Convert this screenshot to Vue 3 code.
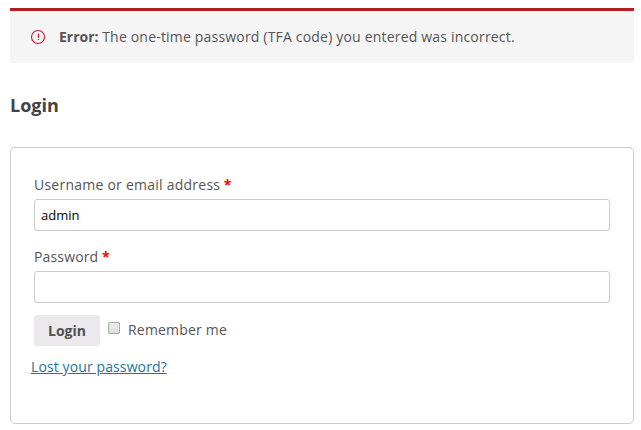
<script setup>
import { ref } from 'vue'

const username = ref('admin')
const password = ref('')
const remember = ref(false)
</script>

<template>
  <main class="page">
    <div class="notice" role="alert">
      <svg class="notice-icon" width="16" height="16" viewBox="0 0 16 16" aria-hidden="true">
        <circle cx="8" cy="8" r="6.5" fill="none" stroke="#c3202b" stroke-width="1.1" />
        <path d="M8.5 4.5V9M8.5 10V11" fill="none" stroke="#c3202b" stroke-width="1.1" />
      </svg>
      <p class="notice-text"><strong>Error:</strong> <span class="message">The one-time password (TFA code) you entered was incorrect.</span></p>
    </div>
    <h2 class="title">Login</h2>
    <form class="login" @submit.prevent>
      <label class="label" for="username"><span class="username-text">Username or email address</span> <span class="required">*</span></label>
      <input id="username" v-model="username" class="field" type="text" />
      <label class="label second" for="password"><span class="password-text">Password</span> <span class="required">*</span></label>
      <input id="password" v-model="password" class="field" type="password" />
      <div class="actions">
        <button class="submit" type="submit">Login</button>
        <label class="remember">
          <input v-model="remember" class="check" type="checkbox" />
          <span class="remember-text">Remember me</span>
        </label>
      </div>
      <a class="lost" href="#">Lost your password?</a>
    </form>
  </main>
</template>

<style>
body {
  background: #fff;
}
</style>

<style scoped>
.page {
  box-sizing: border-box;
  width: 641px;
  height: 430px;
  padding: 8px 7px 0 10px;
  font-family: "Open Sans", sans-serif;
  font-size: 14px;
  line-height: 20px;
  color: #555;
}
.notice {
  box-sizing: border-box;
  display: flex;
  align-items: center;
  height: 55px;
  padding: 0 20px;
  border-top: 3px solid #b81c23;
  background: #f5f5f5;
}
.notice-icon {
  flex: none;
  margin-right: 13px;
}
.notice-text {
  margin: 0;
  white-space: nowrap;
}
.message {
  letter-spacing: 0.187px;
}
.username-text {
  letter-spacing: 0.24px;
}
.password-text {
  letter-spacing: 0.15px;
}
.remember-text {
  letter-spacing: 0.19px;
}
.title {
  margin: 30px 0 30px;
  font-size: 18px;
  line-height: 24px;
  font-weight: 700;
  color: #444;
}
.login {
  box-sizing: border-box;
  display: flex;
  flex-direction: column;
  height: 277px;
  padding: 27px 23px 0;
  border: 1px solid #ccc;
  border-radius: 5px;
}
.label {
  height: 24px;
}
.second {
  margin-top: 16px;
}
.required {
  font-weight: 700;
  color: #f00;
}
.field {
  box-sizing: border-box;
  width: 100%;
  height: 32px;
  margin: 0;
  padding: 0 6px;
  border: 1px solid #ccc;
  border-radius: 3px;
  outline: none;
  background: #fff;
  font-family: inherit;
  font-size: 13px;
  color: #000;
}
.actions {
  display: flex;
  margin-top: 12px;
}
.submit {
  width: 66px;
  height: 31px;
  padding: 0;
  border: 0;
  border-radius: 3px;
  background: #ebe9eb;
  font-family: inherit;
  font-size: 14px;
  font-weight: 700;
  line-height: 31px;
  color: #515151;
}
.remember {
  display: flex;
  align-items: flex-start;
  padding: 5px 0 0 8px;
}
.check {
  appearance: none;
  box-sizing: border-box;
  width: 12px;
  height: 12px;
  margin: 2px 8px 0 0;
  border: 1px solid #a9a9a9;
  border-radius: 2px;
  background: linear-gradient(#ededed, #dedede);
}
.lost {
  align-self: flex-start;
  margin: 11px 0 0 -3px;
  letter-spacing: 0.11px;
  color: #21759b;
  text-decoration: underline;
}
</style>
